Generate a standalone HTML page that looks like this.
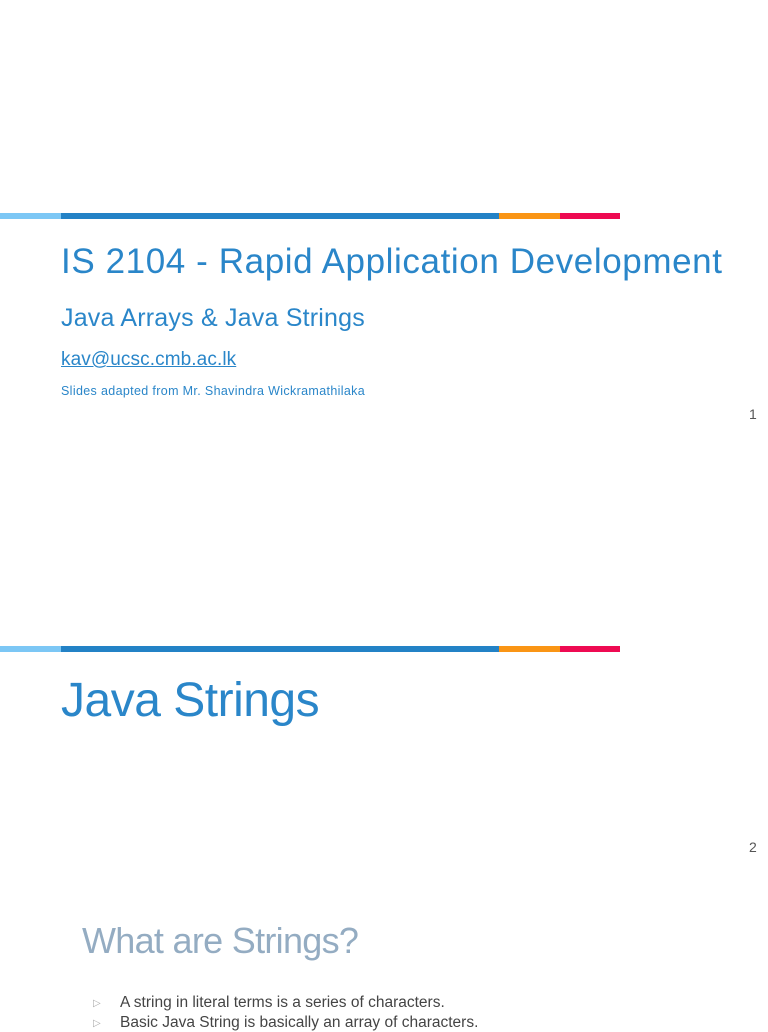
<!DOCTYPE html>
<html><head><style>
body{margin:0;width:768px;height:1024px;background:#fff;position:relative;overflow:hidden;font-family:"Liberation Sans",sans-serif;}
.bar{position:absolute;left:0;height:6px;width:620px;}
.bar div{position:absolute;top:0;height:6px;}
.t{position:absolute;white-space:nowrap;color:#2a86c9;}
</style></head><body>
<div class="bar" style="top:213px"><div style="left:0;width:61px;background:#7cc7f5"></div><div style="left:61px;width:438px;background:#2382c6"></div><div style="left:499px;width:61px;background:#fa9515"></div><div style="left:560px;width:60px;background:#ee0a52"></div></div>
<div class="t" style="left:61px;top:242px;font-size:35px;letter-spacing:0.6px">IS 2104 - Rapid Application Development</div>
<div class="t" style="left:61px;top:304px;font-size:25px;letter-spacing:0.2px">Java Arrays &amp; Java Strings</div>
<div class="t" style="left:61px;top:349px;font-size:19px;text-decoration:underline;letter-spacing:0.1px">kav@ucsc.cmb.ac.lk</div>
<div class="t" style="left:61px;top:384px;font-size:12.5px;letter-spacing:0.35px">Slides adapted from Mr. Shavindra Wickramathilaka</div>
<div class="t" style="left:749px;top:406px;font-size:14px;color:#555">1</div>
<div class="bar" style="top:646px"><div style="left:0;width:61px;background:#7cc7f5"></div><div style="left:61px;width:438px;background:#2382c6"></div><div style="left:499px;width:61px;background:#fa9515"></div><div style="left:560px;width:60px;background:#ee0a52"></div></div>
<div class="t" style="left:61px;top:673px;font-size:48px;letter-spacing:-0.5px">Java Strings</div>
<div class="t" style="left:749px;top:839px;font-size:14px;color:#555">2</div>
<div class="t" style="left:82px;top:920px;font-size:36px;color:#94acc2;letter-spacing:-0.7px">What are Strings?</div>
<div class="t" style="left:93px;top:998px;font-size:10px;color:#aaa">▷</div>
<div class="t" style="left:120px;top:994px;font-size:15.5px;color:#444">A string in literal terms is a series of characters.</div>
<div class="t" style="left:93px;top:1018px;font-size:10px;color:#aaa">▷</div>
<div class="t" style="left:120px;top:1014px;font-size:15.5px;color:#444">Basic Java String is basically an array of characters.</div>
</body></html>
